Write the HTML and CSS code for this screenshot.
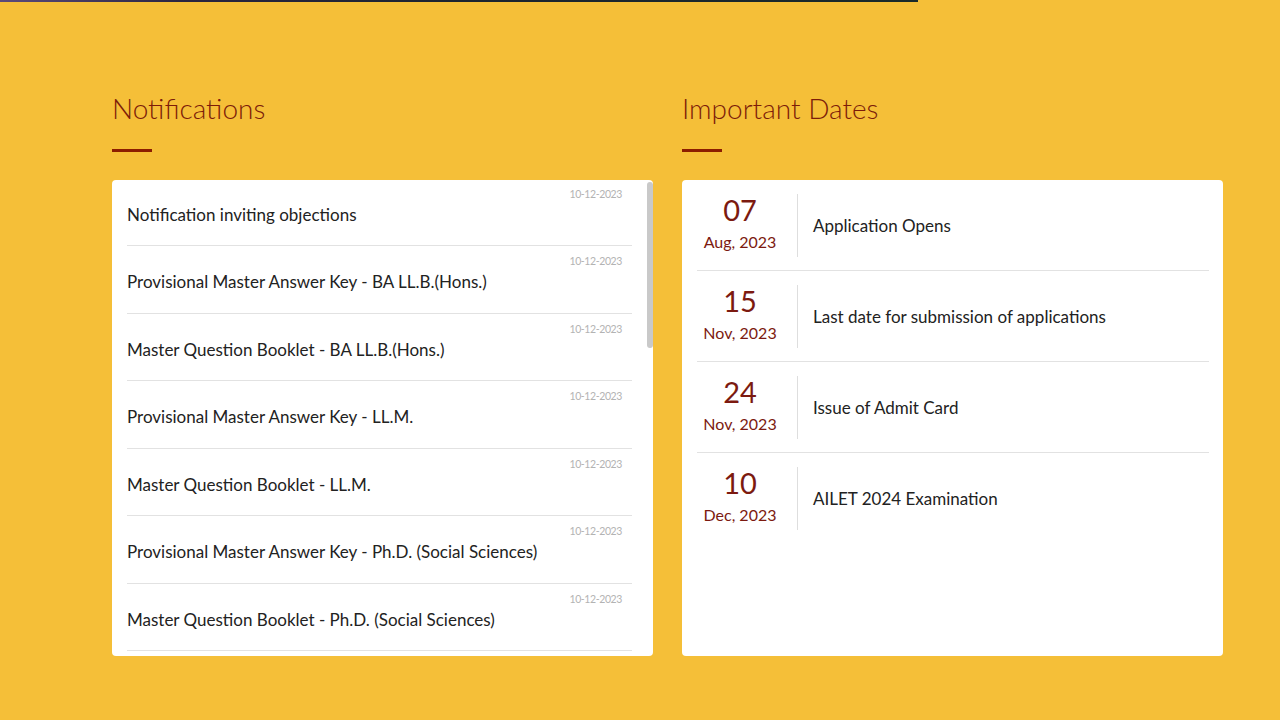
FILE: index.html
```html
<!DOCTYPE html>
<html>
<head>
<meta charset="utf-8">
<title>AILET 2024</title>
<meta name="viewport" content="width=device-width, initial-scale=1">
<link rel="stylesheet" href="styles.css">
</head>
<body>

<div class="topstrip"></div>

<div class="main">

  <div class="column">
    <h2 class="heading">Notifications</h2>
    <div class="bar"></div>

    <div class="card">
      <ul class="notices">
        <li><span class="date">10-12-2023</span><a href="#">Notification inviting objections</a></li>
        <li><span class="date">10-12-2023</span><a href="#">Provisional Master Answer Key - BA LL.B.(Hons.)</a></li>
        <li><span class="date">10-12-2023</span><a href="#">Master Question Booklet - BA LL.B.(Hons.)</a></li>
        <li><span class="date">10-12-2023</span><a href="#">Provisional Master Answer Key - LL.M.</a></li>
        <li><span class="date">10-12-2023</span><a href="#">Master Question Booklet - LL.M.</a></li>
        <li><span class="date">10-12-2023</span><a href="#">Provisional Master Answer Key - Ph.D. (Social Sciences)</a></li>
        <li><span class="date">10-12-2023</span><a href="#">Master Question Booklet - Ph.D. (Social Sciences)</a></li>
      </ul>
      <div class="scrollthumb"></div>
    </div>
  </div>

  <div class="column">
    <h2 class="heading">Important Dates</h2>
    <div class="bar"></div>

    <div class="card">
      <div class="dates">
        <div class="daterow">
          <div class="when"><div class="day">07</div><div class="month">Aug, 2023</div></div>
          <div class="what">Application Opens</div>
        </div>
        <div class="daterow">
          <div class="when"><div class="day">15</div><div class="month">Nov, 2023</div></div>
          <div class="what">Last date for submission of applications</div>
        </div>
        <div class="daterow">
          <div class="when"><div class="day">24</div><div class="month">Nov, 2023</div></div>
          <div class="what">Issue of Admit Card</div>
        </div>
        <div class="daterow">
          <div class="when"><div class="day">10</div><div class="month">Dec, 2023</div></div>
          <div class="what">AILET 2024 Examination</div>
        </div>
      </div>
    </div>
  </div>

</div>

</body>
</html>
```

FILE: styles.css
```css
body {
  margin: 0;
  background-color: #f5bf38;
  font-family: Lato, "Open Sans", sans-serif;
  color: #222;
}

/* thin edge of the banner above */
.topstrip {
  width: 918px;
  height: 2px;
  background: linear-gradient(to right, #5b4a7a, #2a2540 20%, #1c2430 50%, #1a2a2a);
}

.main {
  display: flex;
  gap: 29px;
  padding: 88px 0 0 112px;
}

.column {
  width: 541px;
}

/* Section headings */
.heading {
  margin: 0;
  font-size: 28px;
  line-height: 36px;
  font-weight: 300;
  color: #7d1c09;
}

.bar {
  width: 40px;
  height: 3px;
  margin: 23px 0 28px 0;
  background-color: #8c1d00;
}

.card {
  position: relative;
  height: 476px;
  background-color: #fff;
  border-radius: 4px;
  overflow: hidden;
}

/* Notifications list */
.notices {
  list-style: none;
  margin: 0;
  padding: 0 21px 0 15px;
}

.notices li {
  padding: 7px 10px 18.5px 0;
  border-bottom: 1px solid #e2e2e2;
}

.notices li:first-child {
  padding-top: 5.5px;
}

.notices .date {
  display: block;
  text-align: right;
  font-size: 10.5px;
  line-height: 17px;
  letter-spacing: -0.4px;
  color: #b3b3b3;
}

.notices a {
  display: block;
  font-size: 17px;
  line-height: 24px;
  color: #222;
  text-decoration: none;
}

/* scrollbar of the list */
.scrollthumb {
  position: absolute;
  top: 2px;
  right: 0;
  width: 6px;
  height: 166px;
  border-radius: 3px;
  background-color: #c9c9c9;
}

/* Important dates */
.dates {
  padding: 0 14px 0 15px;
}

.daterow {
  display: flex;
  padding: 13.5px 0;
  border-bottom: 1px solid #e2e2e2;
}

.daterow:last-child {
  border-bottom: none;
}

.when {
  width: 86px;
  height: 63px;
  margin-right: 14px;
  text-align: center;
  color: #7c1a10;
}

.day {
  font-size: 29px;
  line-height: 32px;
}

.month {
  margin-top: 5px;
  font-size: 16px;
  line-height: 22px;
}

.what {
  display: flex;
  align-items: center;
  padding-left: 15px;
  border-left: 1px solid #dedede;
  font-size: 17px;
}
```
